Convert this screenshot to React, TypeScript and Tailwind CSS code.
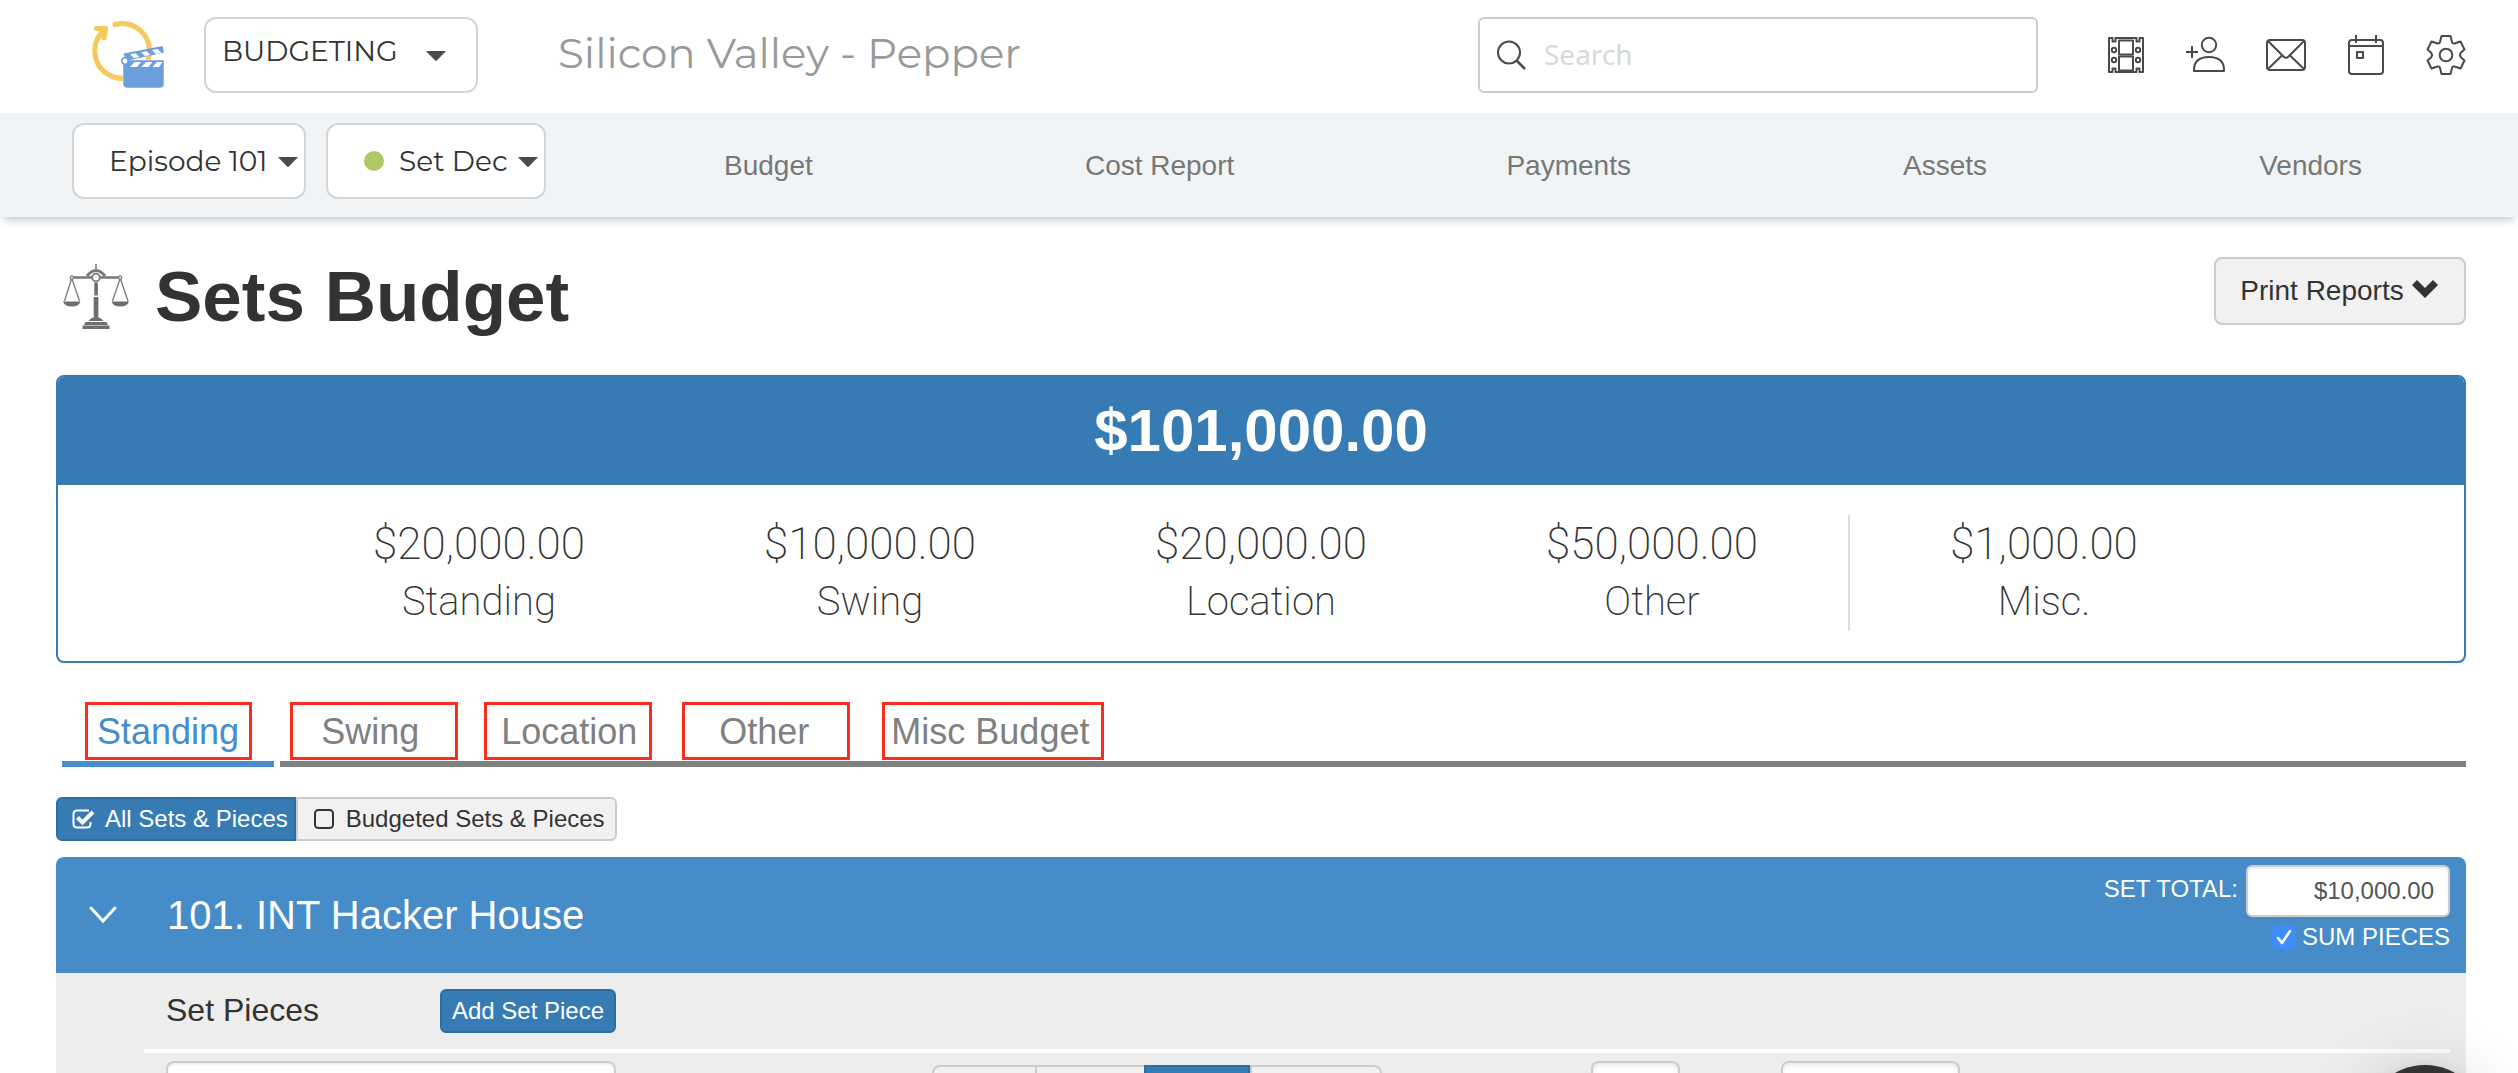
import type { ReactNode } from "react";

const geo = "font-[Montserrat,Inter,sans-serif]";

function Caret({ className }: { className: string }) {
  return (
    <svg viewBox="0 0 20 10" aria-hidden="true" className={`pointer-events-none absolute h-2.5 w-5 fill-[#4a4a4a] ${className}`}>
      <path d="M1 0h18q1 0 .4.8L10.8 9.5q-.8.8-1.6 0L.6.8Q0 0 1 0z" />
    </svg>
  );
}

function Logo() {
  return (
    <svg viewBox="0 0 72 70" className="h-[70px] w-[72px] shrink-0" role="img" aria-label="Home">
      <path d="M23 4.500A27.300 27.300 0 1 1 12.500 10" fill="none" stroke="#f5c95b" strokeWidth="5" strokeLinecap="round" />
      <path d="M4.500 8.500h9v1l-1.500 8.500" fill="none" stroke="#f5c95b" strokeWidth="5" strokeLinecap="round" strokeLinejoin="round" />
      <path d="M31 42V64q0 4 4 4H68q4 0 4-4V40H31z" fill="#6b9fdc" stroke="#fff" strokeWidth="0.500" />
      <path d="M31.500 33.500L70.500 26l1.500 6.500L34 41z" fill="#6b9fdc" />
      <g fill="#fff">
        <path d="M42.500 42h6.500l-4 5h-7zM54 42h6.500l-4 5h-7zM65 42h5.500l-3.500 5h-6.500z" />
        <path d="M38 34.300l5.500-1 4 3.700-5.500 1.200zM49 32.200l5.500-1 4 3.700-5.500 1.200zM60 30l5.500-1 4 3.700-5.500 1.200z" />
      </g>
      <circle cx="33" cy="41" r="3.200" fill="#fff" stroke="#6b9fdc" strokeWidth="1.500" />
    </svg>
  );
}

function Icon({ label, children }: { label: string; children: ReactNode }) {
  return (
    <button type="button" aria-label={label} className="size-10">
      <svg viewBox="0 0 40 40" className="size-10" fill="none" stroke="#4a4a4a" strokeWidth="2" strokeLinecap="butt" strokeLinejoin="round">
        {children}
      </svg>
    </button>
  );
}

function Scales() {
  return (
    <svg viewBox="0 0 66 66" className="size-[66px] shrink-0" aria-hidden="true">
      <g fill="none" stroke="#77787b">
        <path d="M33 0v7" strokeWidth="1.500" />
        <path d="M10 13.500H56" strokeWidth="2.500" />
        <path d="M24 12q9-11 18 0" strokeWidth="3" />
        <path d="M8.500 15L1.500 37M9 15l7.500 22M57 15l-7.500 22M57.500 15L65 37" strokeWidth="1.300" />
        <circle cx="33" cy="13.500" r="3.800" fill="#fff" strokeWidth="1.800" />
        <circle cx="8.800" cy="13.500" r="1.600" fill="#fff" strokeWidth="1.200" />
        <circle cx="57.200" cy="13.500" r="1.600" fill="#fff" strokeWidth="1.200" />
      </g>
      <g fill="#6d6e71">
        <path d="M0 37.500h17.500q-1.500 5-8.700 5T0 37.500zM48.500 37.500H66q-1.500 5-8.700 5t-8.800-5z" />
        <path d="M31.300 18.500h3.600v13h-3.600zM30.700 33h4.700v20h-4.700z" />
        <path d="M25.500 57q3-4 7.500-4t7.500 4zM22.500 58h21l1.500 3h-24zM19.500 61.500h27V65h-27z" />
      </g>
    </svg>
  );
}

const navLinks = ["Budget", "Cost Report", "Payments", "Assets", "Vendors"];

const stats = [
  { value: "$20,000.00", label: "Standing", cell: "col-span-2 col-start-2" },
  { value: "$10,000.00", label: "Swing", cell: "col-span-2" },
  { value: "$20,000.00", label: "Location", cell: "col-span-2" },
  { value: "$50,000.00", label: "Other", cell: "col-span-2" },
  { value: "$1,000.00", label: "Misc.", cell: "col-span-2 border-l-2 border-[#ddd]" },
];

const tabs = [
  { label: "Swing", frame: "left-2.5 w-[168px]" },
  { label: "Location", frame: "left-6 w-[168px]" },
  { label: "Other", frame: "left-1 w-[168px]" },
  { label: "Misc Budget", frame: "left-8 w-[222px]" },
];

function Frame({ className }: { className: string }) {
  return <span aria-hidden="true" className={`pointer-events-none absolute top-0 h-[58px] border-3 border-[#f92d1c] ${className}`} />;
}

export default function App() {
  return (
    <div className="relative h-screen overflow-hidden bg-white font-['Helvetica_Neue','Liberation_Sans',Arial,sans-serif] text-[#333]">
      <header className="flex items-center pt-[17px] pr-[52px] pb-5 pl-[92px]">
        <Logo />
        <div className="relative ml-10 w-[274px] shrink-0">
          <select aria-label="Module" className={`h-[76px] w-full appearance-none rounded-xl border-2 border-[#d5d5d5] bg-white pb-2 pl-4 text-[28px] ${geo}`}>
            <option>BUDGETING</option>
          </select>
          <Caret className="top-[34px] right-8" />
        </div>
        <p className={`ml-20 pb-1 text-[42px] leading-[60px] whitespace-nowrap text-[#999] ${geo}`}>Silicon Valley - Pepper</p>
        <label className="ml-auto flex h-[76px] w-[560px] items-center gap-[18px] rounded-md border-2 border-[#ccc] px-4">
          <svg viewBox="0 0 30 30" className="size-[30px] shrink-0" fill="none" stroke="#4a4a4a" strokeWidth="2" aria-hidden="true">
            <circle cx="13" cy="12.500" r="11" />
            <path d="M20.500 20.500L29 29" strokeWidth="2.500" />
          </svg>
          <input type="search" aria-label="Search" placeholder="Search" className="min-w-0 flex-1 pb-0.5 font-['Noto_Sans','Open_Sans',sans-serif] text-[28px] outline-none placeholder:text-[#d9d9d9]" />
        </label>
        <div className="ml-[68px] flex gap-10">
          <Icon label="Productions">
            <path d="M3 3h3.500v3.500h3V3h21v3.500h3V3H37v34h-3.500v-3.500h-3V37h-21v-3.500h-3V37H3z" />
            <rect x="13" y="5.500" width="14" height="14" />
            <rect x="13" y="21.500" width="14" height="14" />
            <circle cx="8" cy="15" r="2.200" />
            <circle cx="8" cy="25" r="2.200" />
            <circle cx="32" cy="15" r="2.200" />
            <circle cx="32" cy="25" r="2.200" />
          </Icon>
          <Icon label="Add user">
            <circle cx="23" cy="10" r="7.200" />
            <path d="M8 36v-1C8 26 14 22 23 22s15 4 15 13v1z" />
            <path d="M6 11v12M0 17h12" />
          </Icon>
          <Icon label="Messages">
            <rect x="1" y="5" width="38" height="30" rx="3" />
            <path d="M2 6l15.500 15.500q2.500 2.500 5 0L38 6M2 34l14.500-14M38 34L23.500 20" />
          </Icon>
          <Icon label="Calendar">
            <rect x="3" y="5" width="34" height="34" rx="3" />
            <path d="M3 11h34M10 0v8M30 0v8" />
            <rect x="11" y="17" width="6" height="6" />
          </Icon>
          <Icon label="Settings">
            <circle cx="20" cy="20" r="6.300" />
            <path d="M15.500 1h9l1.500 6q.5 2 2.500 1.500L34.500 6.500 38.500 14.500 35 17.500q-2 2.500 0 5L38.500 25.500 34.500 33.500 28.500 31.500q-2-.5-2.500 1.500L24.500 39h-9L14 33q-.5-2-2.500-1.500L5.500 33.500 1.500 25.500 5 22.500q2-2.500 0-5L1.500 14.500 5.500 6.500 11.500 8.500Q13.500 9 14 7z" />
          </Icon>
        </div>
      </header>

      <nav aria-label="Main" className="flex bg-[#f0f4f7] pt-2.5 pr-5 pb-[18px] pl-[72px] shadow-[0_7px_8px_-4px_rgba(0,0,0,0.22)]">
        <div className="relative w-[234px] shrink-0">
          <select aria-label="Episode" className={`h-[76px] w-full appearance-none rounded-xl border-2 border-[#d5d5d5] bg-white pl-[35px] text-[28px] ${geo}`}>
            <option>Episode 101</option>
          </select>
          <Caret className="top-[34px] right-2" />
        </div>
        <div className="relative ml-5 w-[220px] shrink-0">
          <select aria-label="Department" className={`h-[76px] w-full appearance-none rounded-xl border-2 border-[#d5d5d5] bg-white pl-[71px] text-[28px] ${geo}`}>
            <option>Set Dec</option>
          </select>
          <span className="absolute top-7 left-[38px] size-5 rounded-full bg-[#b2c864]" />
          <Caret className="top-[34px] right-2" />
        </div>
        <ul className="ml-[42px] flex flex-1 items-center justify-around pt-2.5 text-[28px] leading-8 text-[#777]">
          {navLinks.map((link) => (
            <li key={link}>
              <a href="#">{link}</a>
            </li>
          ))}
        </ul>
      </nav>

      <main className="pt-10 pr-[52px] pl-14">
        <div className="flex items-start justify-between">
          <div className="flex items-center gap-[26px] pl-[7px]">
            <Scales />
            <h1 className="text-[71px] leading-20 font-bold">Sets Budget</h1>
          </div>
          <button type="button" className="flex h-[68px] w-[252px] items-center justify-center gap-2 rounded-lg border-2 border-[#ccc] bg-[#f1f1f1] pr-0.5 text-[28px]">
            Print Reports
            <svg viewBox="0 0 26 18" className="mb-1 h-[18px] w-[26px] fill-[#333]" aria-hidden="true">
              <path d="M5 0l8 8 8-8 5 5-13 13L0 5z" />
            </svg>
          </button>
        </div>

        <section aria-label="Budget totals" className="mt-[38px] overflow-hidden rounded-lg border-2 border-[#377bb5] shadow-[0_2px_2px_rgba(0,0,0,0.05)]">
          <h2 className="bg-[#377bb5] py-5 text-center text-[60px] leading-[68px] font-bold text-white">$101,000.00</h2>
          <div className="grid grid-cols-12 p-[30px] text-center font-[Roboto,sans-serif] leading-[58px] font-extralight">
            {stats.map((s) => (
              <div key={s.label} className={s.cell}>
                <p className="text-[44px] leading-[58px]">{s.value}</p>
                <p className="text-[40px] leading-[58px]">{s.label}</p>
              </div>
            ))}
          </div>
        </section>

        <div role="tablist" className="mt-[39px] flex gap-1.5 pl-1.5 text-[36px] leading-[59px] text-[#808080]">
          <button type="button" role="tab" aria-selected="true" className="relative border-b-6 border-[#478dc9] px-[35px] text-[#478dc9]">
            Standing
            <Frame className="left-[23px] w-[167px]" />
          </button>
          <div className="flex flex-1 border-b-6 border-[#808080]">
            {tabs.map((t) => (
              <button key={t.label} type="button" role="tab" aria-selected="false" className="relative px-[41px]">
                {t.label}
                <Frame className={t.frame} />
              </button>
            ))}
          </div>
        </div>

        <div className="mt-[30px] flex text-[24px]">
          <button type="button" aria-pressed="true" className="flex h-11 items-center gap-2.5 rounded-l-md border-2 border-[#2e6da4] bg-[#377bb5] pr-1.5 pl-3.5 text-white">
            <svg viewBox="0 0 23 20" className="h-5 w-[23px]" fill="none" stroke="#fff" aria-hidden="true">
              <path d="M17 1.500H5Q1.500 1.500 1.500 5v10Q1.500 18.500 5 18.500h10q3.500 0 3.500-3.500v-2" strokeWidth="2" />
              <path d="M5.500 8.500l5 5L21 3" strokeWidth="4" />
            </svg>
            All Sets &amp; Pieces
          </button>
          <button type="button" aria-pressed="false" className="flex h-11 items-center gap-3 rounded-r-md border-2 border-[#ccc] bg-[#f1f1f1] pr-2.5 pl-4">
            <svg viewBox="0 0 20 20" className="size-5" fill="none" stroke="#333" strokeWidth="2" aria-hidden="true">
              <rect x="1" y="1" width="18" height="18" rx="3.500" />
            </svg>
            Budgeted Sets &amp; Pieces
          </button>
        </div>

        <section aria-label="101. INT Hacker House" className="mt-4">
          <div className="flex h-[116px] items-start justify-between rounded-t-lg bg-[#468cc8] pt-2 pr-4 pl-[33px] text-white">
            <div className="flex items-center gap-[50px] pt-[26px]">
              <button type="button" aria-label="Collapse set">
                <svg viewBox="0 0 28 18" className="h-[18px] w-7" fill="none" stroke="#fff" strokeWidth="3" strokeLinecap="round" aria-hidden="true">
                  <path d="M2 2l12 13L26 2" />
                </svg>
              </button>
              <h3 className="text-[40px] leading-[48px]">101. INT Hacker House</h3>
            </div>
            <div className="flex flex-col items-end gap-1.5 text-[24px] leading-7">
              <label className="flex items-start gap-2">
                <span className="pt-2.5">SET TOTAL:</span>
                <input type="text" defaultValue="$10,000.00" className="h-[52px] w-[204px] rounded-md border-2 border-[#ccc] bg-white px-3.5 text-right text-[#555] shadow-[inset_0_2px_2px_rgba(0,0,0,0.08)]" />
              </label>
              <label className="flex items-center gap-1.5">
                <span className="grid size-6">
                  <input type="checkbox" defaultChecked className="col-start-1 row-start-1 size-6 appearance-none rounded-md bg-[#3f8cfd]" />
                  <svg viewBox="0 0 24 24" className="pointer-events-none col-start-1 row-start-1 size-6" fill="none" stroke="#fff" strokeWidth="2.500" strokeLinecap="round" strokeLinejoin="round" aria-hidden="true">
                    <path d="M6 13l4 5 8-12" />
                  </svg>
                </span>
                SUM PIECES
              </label>
            </div>
          </div>
          <div className="bg-[#ededed]">
            <div className="flex h-[76px] items-center rounded-b-lg pl-[110px]">
              <h4 className="w-[274px] pb-0.5 text-[32px] leading-10">Set Pieces</h4>
              <button type="button" className="h-11 w-44 rounded-md border-2 border-[#2e6da4] bg-[#377bb5] text-[24px] leading-7 whitespace-nowrap text-white">Add Set Piece</button>
            </div>
            <div className="mr-4 ml-[88px] h-1 bg-white" />
            <div className="flex items-start pt-2 pl-[110px]">
              <input type="text" aria-label="Piece name" className="h-[68px] w-[450px] rounded-lg border-2 border-[#ccc] bg-white shadow-[inset_0_2px_2px_rgba(0,0,0,0.08)]" />
              <div role="group" aria-label="Piece type" className="mt-1 ml-[316px] flex h-[60px] w-[450px]">
                <button type="button" aria-label="Type 1" className="w-[103px] rounded-l-lg border-2 border-r-0 border-[#ccc] bg-[#f1f1f1]" />
                <button type="button" aria-label="Type 2" className="w-[109px] border-2 border-r-0 border-[#ccc] bg-[#f1f1f1]" />
                <button type="button" aria-label="Type 3" aria-pressed="true" className="w-[106px] border-2 border-[#2e6da4] bg-[#377bb5]" />
                <button type="button" aria-label="Type 4" className="w-[132px] rounded-r-lg border-2 border-[#ccc] bg-[#f1f1f1]" />
              </div>
              <input type="text" aria-label="Quantity" className="ml-[209px] h-[68px] w-[89px] rounded-lg border-2 border-[#ccc] bg-white shadow-[inset_0_2px_4px_rgba(0,0,0,0.1)]" />
              <input type="text" aria-label="Price" className="ml-[101px] h-[68px] w-[179px] rounded-lg border-2 border-[#ccc] bg-white shadow-[inset_0_2px_4px_rgba(0,0,0,0.1)]" />
            </div>
          </div>
        </section>
      </main>

      <button type="button" aria-label="Open chat" className="fixed right-[33px] -bottom-28 size-30 rounded-full bg-[#333] shadow-[0_4px_64px_rgba(0,0,0,0.16),0_2px_12px_rgba(0,0,0,0.12)]" />
    </div>
  );
}
